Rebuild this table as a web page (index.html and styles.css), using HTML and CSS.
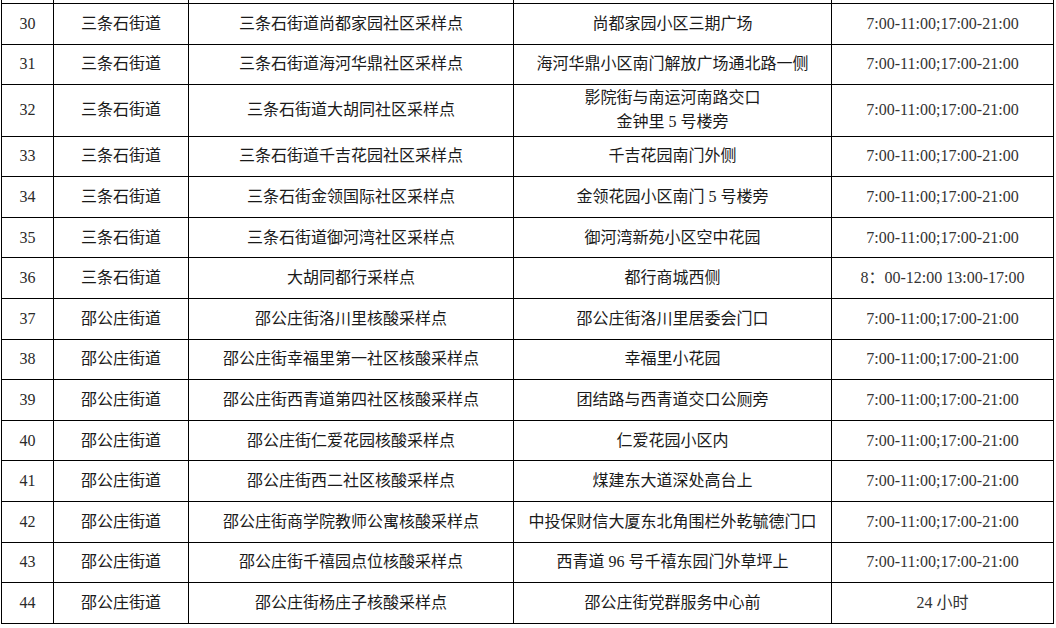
FILE: index.html
```html
<!DOCTYPE html>
<html lang="zh-CN">
<head>
<meta charset="utf-8">
<link rel="stylesheet" href="styles.css">
</head>
<body>
<div class="page">
<table class="sites">
<colgroup>
<col class="c-no"><col class="c-street"><col class="c-name"><col class="c-addr"><col class="c-time">
</colgroup>
<tbody>
<tr class="spacer"><td></td><td></td><td></td><td></td><td></td></tr>
<tr><td class="num">30</td><td>三条石街道</td><td>三条石街道尚都家园社区采样点</td><td>尚都家园小区三期广场</td><td class="time">7:00-11:00;17:00-21:00</td></tr>
<tr><td class="num">31</td><td>三条石街道</td><td>三条石街道海河华鼎社区采样点</td><td>海河华鼎小区南门解放广场通北路一侧</td><td class="time">7:00-11:00;17:00-21:00</td></tr>
<tr class="tall"><td class="num">32</td><td>三条石街道</td><td>三条石街道大胡同社区采样点</td><td class="two">影院街与南运河南路交口<br>金钟里 5 号楼旁</td><td class="time">7:00-11:00;17:00-21:00</td></tr>
<tr><td class="num">33</td><td>三条石街道</td><td>三条石街道千吉花园社区采样点</td><td>千吉花园南门外侧</td><td class="time">7:00-11:00;17:00-21:00</td></tr>
<tr><td class="num">34</td><td>三条石街道</td><td>三条石街金领国际社区采样点</td><td>金领花园小区南门 5 号楼旁</td><td class="time">7:00-11:00;17:00-21:00</td></tr>
<tr><td class="num">35</td><td>三条石街道</td><td>三条石街道御河湾社区采样点</td><td>御河湾新苑小区空中花园</td><td class="time">7:00-11:00;17:00-21:00</td></tr>
<tr><td class="num">36</td><td>三条石街道</td><td>大胡同都行采样点</td><td>都行商城西侧</td><td class="time">8：00-12:00 13:00-17:00</td></tr>
<tr><td class="num">37</td><td>邵公庄街道</td><td>邵公庄街洛川里核酸采样点</td><td>邵公庄街洛川里居委会门口</td><td class="time">7:00-11:00;17:00-21:00</td></tr>
<tr><td class="num">38</td><td>邵公庄街道</td><td>邵公庄街幸福里第一社区核酸采样点</td><td>幸福里小花园</td><td class="time">7:00-11:00;17:00-21:00</td></tr>
<tr><td class="num">39</td><td>邵公庄街道</td><td>邵公庄街西青道第四社区核酸采样点</td><td>团结路与西青道交口公厕旁</td><td class="time">7:00-11:00;17:00-21:00</td></tr>
<tr><td class="num">40</td><td>邵公庄街道</td><td>邵公庄街仁爱花园核酸采样点</td><td>仁爱花园小区内</td><td class="time">7:00-11:00;17:00-21:00</td></tr>
<tr><td class="num">41</td><td>邵公庄街道</td><td>邵公庄街西二社区核酸采样点</td><td>煤建东大道深处高台上</td><td class="time">7:00-11:00;17:00-21:00</td></tr>
<tr><td class="num">42</td><td>邵公庄街道</td><td>邵公庄街商学院教师公寓核酸采样点</td><td>中投保财信大厦东北角围栏外乾毓德门口</td><td class="time">7:00-11:00;17:00-21:00</td></tr>
<tr><td class="num">43</td><td>邵公庄街道</td><td>邵公庄街千禧园点位核酸采样点</td><td>西青道 96 号千禧东园门外草坪上</td><td class="time">7:00-11:00;17:00-21:00</td></tr>
<tr><td class="num">44</td><td>邵公庄街道</td><td>邵公庄街杨庄子核酸采样点</td><td>邵公庄街党群服务中心前</td><td class="time">24 小时</td></tr>
</tbody>
</table>
</div>
</body>
</html>
```

FILE: styles.css
```css
html, body {
  margin: 0;
  padding: 0;
  background: #ffffff;
}

.page {
  padding: 0 0 0 1px;
  width: 1056px;
  height: 628px;
  box-sizing: border-box;
  overflow: hidden;
}

.sites {
  border-collapse: collapse;
  table-layout: fixed;
  width: 1052px;
  font-family: "Liberation Serif", "Noto Sans CJK SC", sans-serif;
  font-size: 16px;
  color: #1a1a1a;
}

.c-no { width: 52px; }
.c-street { width: 135px; }
.c-name { width: 325px; }
.c-addr { width: 318px; }
.c-time { width: 222px; }

.sites td {
  border: 1.5px solid #000;
  padding: 0;
  height: 39.6px;
  text-align: center;
  vertical-align: middle;
  line-height: 20px;
  white-space: nowrap;
}

.sites tr.spacer td {
  height: 3px;
  border-top: none;
}

.sites tr.tall td {
  height: 50.5px;
}

.sites td.two {
  line-height: 24px;
}

.sites td.num {
  font-size: 16px;
  color: #2a2a2a;
}

.sites td.time {
  font-size: 16px;
  color: #333;
}
```
